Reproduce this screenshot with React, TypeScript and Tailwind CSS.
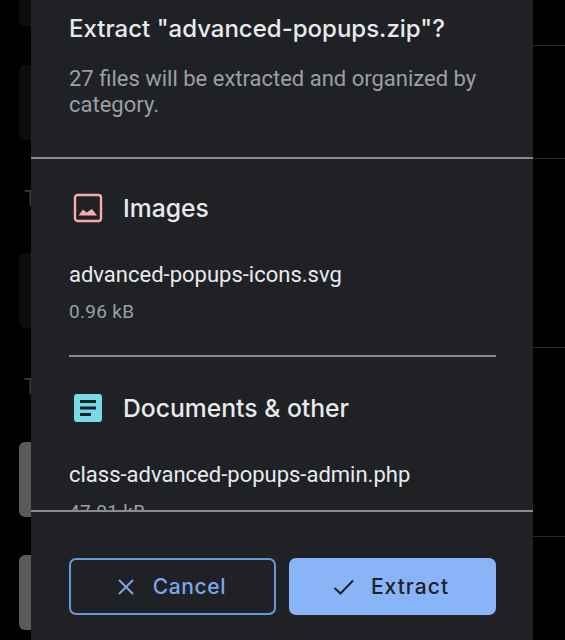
const Thumb = ({ gray }: { gray?: boolean }) => (
  <div className={`ml-[19px] h-[75px] w-[12px] rounded-l-[6px] ${gray ? "bg-[#5a5a58]" : "bg-[#0d0d0e]"}`} />
);

const Letter = () => (
  <div className="ml-[24px] h-[18px] w-[7px] overflow-hidden text-[22px] leading-[18px] text-[#3a3a3a]">T</div>
);

function LeftGutter() {
  return (
    <div className="flex w-[31px] shrink-0 flex-col">
      <div className="ml-[19px] h-[26px] w-[12px] rounded-bl-[6px] bg-[#0d0d0e]" />
      <div className="h-[39px]" />
      <Thumb />
      <div className="h-[50px]" />
      <Letter />
      <div className="h-[45px]" />
      <Thumb />
      <div className="h-[50px]" />
      <Letter />
      <div className="h-[46px]" />
      <Thumb gray />
      <div className="h-[38px]" />
      <Thumb gray />
    </div>
  );
}

function RightGutter() {
  return (
    <div className="flex w-[32px] shrink-0 flex-col">
      <div className="mt-[45px] h-px bg-[#2b2b2b]" />
      <div className="mt-[112px] h-px bg-[#2b2b2b]" />
      <div className="mt-[188px] h-px bg-[#2b2b2b]" />
      <div className="mt-[188px] h-px bg-[#2b2b2b]" />
    </div>
  );
}

function ImageIcon() {
  return (
    <svg width="30" height="30" viewBox="0 0 30 30" className="shrink-0">
      <rect x="2" y="2" width="26" height="26" rx="2.5" fill="none" stroke="#f6aea9" strokeWidth="2.4" />
      <path d="M5.5 22.5 L10 16.5 L13.5 19.5 L19 16 L24 22.5 Z" fill="#f6aea9" />
    </svg>
  );
}

function DocIcon() {
  return (
    <svg width="30" height="30" viewBox="0 0 30 30" className="shrink-0">
      <rect x="1" y="1" width="28" height="28" rx="3" fill="#78d9ec" />
      <rect x="7" y="7" width="16" height="3" fill="#202124" />
      <rect x="7" y="13.5" width="16" height="3" fill="#202124" />
      <rect x="7" y="20" width="11" height="3" fill="#202124" />
    </svg>
  );
}

export default function App() {
  return (
    <div className="flex h-[640px] w-[565px] overflow-hidden bg-black font-['Roboto',sans-serif]">
      <LeftGutter />
      <div className="flex h-[640px] w-[502px] shrink-0 flex-col bg-[#202124]">
        <div className="h-[157px] shrink-0 pl-[38px] pr-[37px] pt-[14px]">
          <h1 className="font-['Inter',sans-serif] text-[24px] leading-[30px] font-medium text-[#e8eaed]">Extract "advanced-popups.zip"?</h1>
          <p className="mt-[22px] text-[22px] leading-[26px] text-[#9aa0a6]">
            27 files will be extracted and organized by category.
          </p>
        </div>
        <div className="h-[2px] shrink-0 bg-[#8a8b8d]" />
        <div className="h-[351px] shrink-0 overflow-hidden pl-[38px] pr-[37px]">
          <div className="mt-[33px] flex h-[32px] items-center gap-[20px] pl-[4px]">
            <ImageIcon />
            <span className="pt-px font-['Inter',sans-serif] text-[24.7px] font-medium text-[#e8eaed]">Images</span>
          </div>
          <p className="mt-[37px] text-[22px] leading-[28px] text-[#e8eaed]">advanced-popups-icons.svg</p>
          <p className="mt-[11px] text-[19px] tracking-[0.3px] leading-[24px] text-[#9aa0a6]">0.96 kB</p>
          <div className="mt-[31px] h-[2px] bg-[#8a8b8d]" />
          <div className="mt-[35px] flex h-[32px] items-center gap-[20px] pl-[4px]">
            <DocIcon />
            <span className="pt-px font-['Inter',sans-serif] text-[24.7px] font-medium text-[#e8eaed]">Documents &amp; other</span>
          </div>
          <p className="mt-[37px] text-[22px] leading-[28px] text-[#e8eaed]">class-advanced-popups-admin.php</p>
          <p className="mt-[11px] text-[19px] tracking-[0.3px] leading-[24px] text-[#9aa0a6]">47.01 kB</p>
        </div>
        <div className="h-[2px] shrink-0 bg-[#8a8b8d]" />
        <div className="flex gap-[13px] pl-[38px] pr-[37px] pt-[46px]">
          <button className="flex h-[57px] w-[207px] items-center justify-center gap-[18px] rounded-[7px] border-2 border-[#6a97d6] pr-[2px] font-['Inter',sans-serif] text-[21px] font-medium tracking-[0.6px] text-[#7aa7ec]">
            <svg width="18" height="18" viewBox="0 0 18 18" fill="none" stroke="#7aa7ec" strokeWidth="2"><path d="M2 2 L16 16 M16 2 L2 16" /></svg>
            Cancel
          </button>
          <button className="flex h-[57px] w-[207px] items-center justify-center gap-[16px] rounded-[7px] bg-[#8ab4f8] pr-[3px] font-['Inter',sans-serif] text-[21px] font-medium tracking-[1px] text-[#202124]">
            <svg width="22" height="18" viewBox="0 0 22 18" fill="none" stroke="#202124" strokeWidth="2"><path d="M1.5 10 L7.5 15.5 L20 2.5" /></svg>
            Extract
          </button>
        </div>
      </div>
      <RightGutter />
    </div>
  );
}
